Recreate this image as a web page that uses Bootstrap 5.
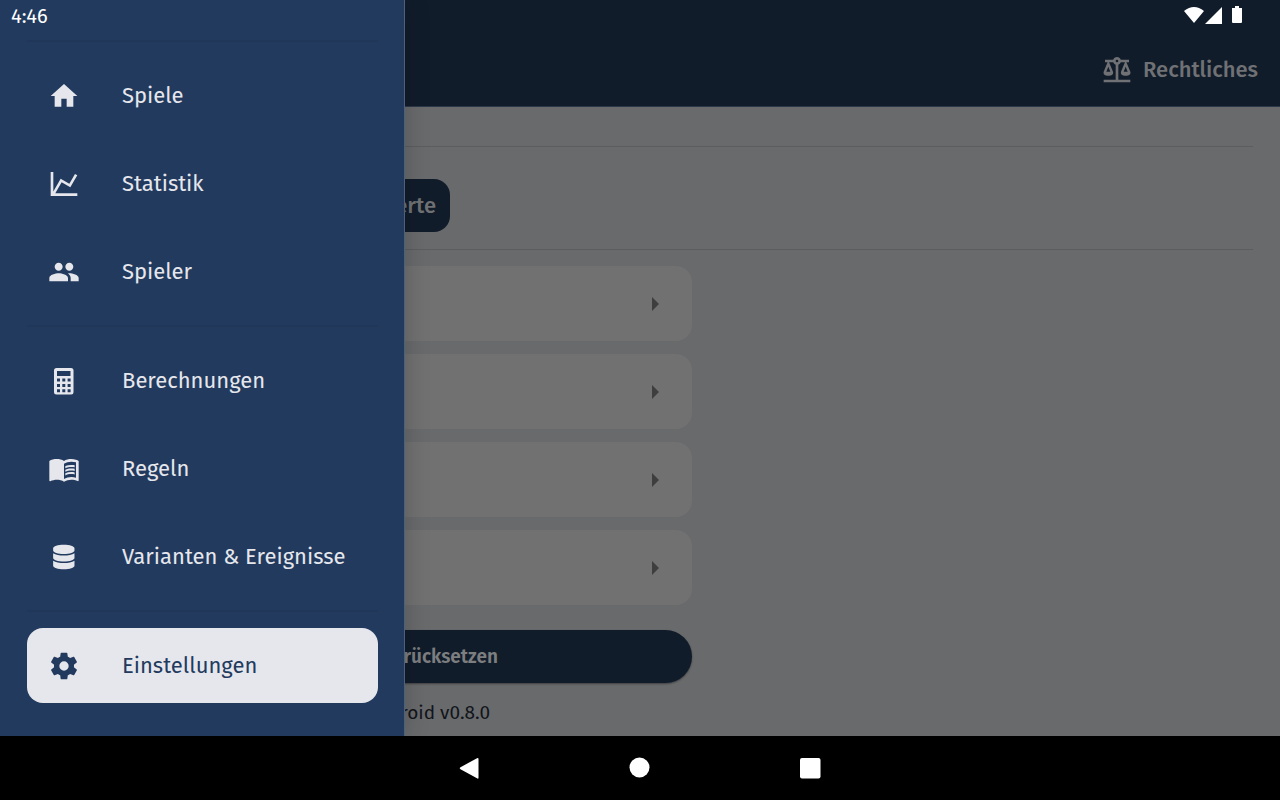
<!DOCTYPE html>
<html lang="de">
<head>
<meta charset="utf-8">
<meta name="viewport" content="width=device-width, initial-scale=1">
<title>Einstellungen</title>
<link rel="stylesheet" href="https://cdn.jsdelivr.net/npm/bootstrap@5.3.0/dist/css/bootstrap.min.css">
<style>
  :root { --navy: #223a5e; --dim-navy: #111c2b; --dim-page: #696a6c; --dim-card: #717171; --dim-text: #707174; --pale: #e6e7ed; }
  body { font-family: "Fira Sans", "Noto Sans", sans-serif; background: var(--dim-page); }
  svg { display: block; fill: currentColor; flex: none; }

  .status-bar { height: 32px; padding: 0 36px 0 11px; color: #fff; font-size: 20px; z-index: 3; pointer-events: none; }
  .app-bar { height: 107px; padding: 32px 22px 0; background: var(--dim-navy); border-bottom: 1px solid #2c3849; }
  .legal-link { color: var(--dim-text); font-size: 22px; font-weight: 500; gap: 10px; }

  .page-body { padding: 39px 27px 0; }
  .page-rule { height: 1px; background: #5c5d5f; }
  .reset-values { width: 423px; height: 53px; margin: 32px 0 17px; padding: 0 14px; border-radius: 16px; background: var(--dim-navy); color: var(--dim-text); font-size: 22px; font-weight: 500; }
  .settings-col { max-width: 665px; padding-top: 16px; gap: 13px; }
  .setting-row { height: 75px; padding: 0 33px; border-radius: 16px; background: var(--dim-card); color: #3e3e3e; }
  .reset-all { height: 53px; margin-top: 12px; padding: 2px 194px 0; border-radius: 27px; background: var(--dim-navy); color: #7d7e80; font-size: 19px; font-weight: 600; box-shadow: 0 1px 2px rgba(0,0,0,.4); }
  .version-line { padding-right: 202px; color: #11151b; font-size: 19px; line-height: 34px; }

  .drawer { width: 405px; padding: 40px 26px 0 27px; background: var(--navy); border-right: 1px solid #4d617f; box-shadow: 0 0 24px rgba(0,0,0,.2); z-index: 2; }
  .drawer-rule { height: 2px; margin: 16px 0; background: #20375a; }
  .drawer-rule:first-child { margin-top: 0; }
  .drawer-list { gap: 13px; }
  .drawer-link { height: 75px; padding: 0 21px; gap: 42px; border-radius: 16px; color: var(--pale); font-size: 22px; }
  .drawer-link.active { background: var(--pale); color: var(--navy); }

  .system-nav { height: 64px; background: #000; color: #fff; gap: 139px; z-index: 4; }
</style>
</head>
<body>
<div class="d-flex flex-column vh-100 overflow-hidden">
  <div class="position-relative flex-grow-1 overflow-hidden">

    <div class="status-bar position-absolute top-0 start-0 end-0 d-flex align-items-center justify-content-between">
      <span>4:46</span>
      <svg width="64" height="20" viewBox="0 0 64 20" aria-hidden="true">
        <path d="M4 5Q14-3 24 5L14 17ZM42 1V18H25ZM52 2h3V0h4v2h3v14q0 1-1 1h-8q-1 0-1-1Z"/>
      </svg>
    </div>

    <nav class="drawer position-absolute top-0 bottom-0 start-0" aria-label="Hauptmenü">
      <div class="drawer-rule"></div>
      <div class="drawer-list d-flex flex-column">
        <a class="drawer-link d-flex align-items-center text-decoration-none" href="#spiele">
          <svg width="32" height="32" viewBox="0 0 24 24"><path d="M10,20V14H14V20H19V12H22L12,3L2,12H5V20H10Z"/></svg>
          <span>Spiele</span></a>
        <a class="drawer-link d-flex align-items-center text-decoration-none" href="#statistik">
          <svg width="32" height="32" viewBox="0 0 24 24"><path d="M16,11.78L20.24,4.45L21.97,5.45L16.74,14.5L10.23,10.75L5.46,19H22V21H2V3H4V17.54L9.5,8L16,11.78Z"/></svg>
          <span>Statistik</span></a>
        <a class="drawer-link d-flex align-items-center text-decoration-none" href="#spieler">
          <svg width="32" height="32" viewBox="0 0 24 24"><path d="M16 11c1.66 0 2.99-1.34 2.99-3S17.66 5 16 5c-1.66 0-3 1.34-3 3s1.34 3 3 3zm-8 0c1.66 0 2.99-1.34 2.99-3S9.66 5 8 5C6.34 5 5 6.34 5 8s1.34 3 3 3zm0 2c-2.33 0-7 1.17-7 3.5V19h14v-2.500c0-2.330-4.670-3.500-7-3.500zm8 0c-.29 0-.62.02-.97.05 1.160.84 1.970 1.970 1.970 3.450V19h6v-2.500c0-2.330-4.670-3.500-7-3.500z"/></svg>
          <span>Spieler</span></a>
      </div>
      <div class="drawer-rule"></div>
      <div class="drawer-list d-flex flex-column">
        <a class="drawer-link d-flex align-items-center text-decoration-none" href="#berechnungen">
          <svg width="32" height="32" viewBox="0 0 32 32"><path fill-rule="evenodd" d="M8.500 3H23q2.500 0 2.500 2.500V27q0 2.500-2.500 2.500H8.500Q6 29.500 6 27V5.500Q6 3 8.500 3ZM9 6v5h13.500V6ZM9 13.500v3h3v-3Zm5.300 0v3h3v-3Zm5.300 0v3h3v-3ZM9 19v3h3v-3Zm5.300 0v3h3v-3Zm5.300 0v3h3v-3ZM9 24.300v3h3v-3Zm5.300 0v3h3v-3Zm5.300 0v3h3v-3Z"/></svg>
          <span>Berechnungen</span></a>
        <a class="drawer-link d-flex align-items-center text-decoration-none" href="#regeln">
          <svg width="32" height="32" viewBox="0 0 24 24"><path d="M21 5c-1.110-.35-2.330-.5-3.500-.5-1.950 0-4.050.4-5.500 1.500-1.450-1.100-3.550-1.500-5.500-1.500S2.450 4.900 1 6v14.650c0 .25.25.5.5.5.1 0 .15-.05.25-.05C3.100 20.450 5.050 20 6.500 20c1.950 0 4.050.4 5.500 1.500 1.350-.85 3.800-1.500 5.500-1.500 1.650 0 3.350.3 4.750 1.050.1.05.15.05.25.05.25 0 .5-.25.5-.5V6c-.6-.45-1.250-.75-2-1zm0 13.500c-1.100-.35-2.300-.5-3.500-.5-1.700 0-4.150.65-5.500 1.500V8c1.350-.85 3.800-1.500 5.500-1.500 1.200 0 2.400.15 3.500.5v11.500z"/><path d="M17.500 10.500c.88 0 1.730.09 2.500.26V9.240c-.79-.15-1.640-.24-2.500-.24-1.700 0-3.240.29-4.500.83v1.660c1.130-.64 2.700-.99 4.500-.99zM13 12.490v1.660c1.130-.64 2.700-.99 4.500-.99.88 0 1.730.09 2.500.26V11.900c-.79-.15-1.640-.24-2.500-.24-1.700 0-3.240.3-4.500.83zm4.500 1.840c-1.700 0-3.240.29-4.500.83v1.660c1.130-.64 2.700-.99 4.500-.99.88 0 1.730.09 2.500.26v-1.520c-.79-.16-1.640-.24-2.500-.24z"/></svg>
          <span>Regeln</span></a>
        <a class="drawer-link d-flex align-items-center text-decoration-none" href="#varianten">
          <svg width="32" height="32" viewBox="-108 -80 672 672"><path d="M448 73.143v45.714C448 159.143 347.667 192 224 192S0 159.143 0 118.857V73.143C0 32.857 100.333 0 224 0s224 32.857 224 73.143zM448 176v102.857C448 319.143 347.667 352 224 352S0 319.143 0 278.857V176c48.125 33.143 136.208 48.572 224 48.572S399.874 209.143 448 176zm0 160v102.857C448 479.143 347.667 512 224 512S0 479.143 0 438.857V336c48.125 33.143 136.208 48.572 224 48.572S399.874 369.143 448 336z"/></svg>
          <span>Varianten &amp; Ereignisse</span></a>
      </div>
      <div class="drawer-rule"></div>
      <a class="drawer-link active d-flex align-items-center text-decoration-none" href="#einstellungen" aria-current="page">
        <svg width="32" height="32" viewBox="0 0 24 24"><path d="M12,15.5A3.5,3.5 0 0,1 8.5,12A3.5,3.5 0 0,1 12,8.5A3.5,3.5 0 0,1 15.5,12A3.5,3.5 0 0,1 12,15.5M19.43,12.97C19.47,12.65 19.5,12.33 19.5,12C19.5,11.67 19.47,11.34 19.43,11L21.54,9.37C21.73,9.22 21.78,8.95 21.66,8.73L19.66,5.27C19.54,5.05 19.27,4.96 19.05,5.05L16.56,6.05C16.04,5.66 15.5,5.32 14.87,5.07L14.5,2.42C14.46,2.18 14.25,2 14,2H10C9.75,2 9.54,2.18 9.5,2.42L9.13,5.07C8.5,5.32 7.96,5.66 7.44,6.05L4.95,5.05C4.73,4.96 4.46,5.05 4.34,5.27L2.34,8.73C2.21,8.95 2.27,9.22 2.46,9.37L4.57,11C4.53,11.34 4.5,11.67 4.5,12C4.5,12.33 4.53,12.65 4.57,12.97L2.46,14.63C2.27,14.78 2.21,15.05 2.34,15.27L4.34,18.73C4.46,18.95 4.73,19.03 4.95,18.95L7.44,17.94C7.96,18.34 8.5,18.68 9.13,18.93L9.5,21.58C9.54,21.82 9.75,22 10,22H14C14.25,22 14.46,21.82 14.5,21.58L14.87,18.93C15.5,18.67 16.04,18.34 16.56,17.94L19.05,18.95C19.27,19.03 19.54,18.95 19.66,18.73L21.66,15.27C21.78,15.05 21.73,14.78 21.54,14.63L19.43,12.97Z"/></svg>
        <span>Einstellungen</span></a>
    </nav>

    <header class="app-bar d-flex align-items-center justify-content-end">
      <a class="legal-link d-flex align-items-center text-decoration-none" href="#rechtliches">
        <svg width="32" height="32" viewBox="0 0 24 24"><path fill-rule="evenodd" d="M12,3C10.73,3 9.6,3.8 9.18,5H3V7H4.95L2,14C1.53,16 3,17 5.5,17C8,17 9.56,16 9,14L6.05,7H9.17C9.5,7.85 10.15,8.5 11,8.83V20H2V22H22V20H13V8.82C13.85,8.5 14.5,7.85 14.82,7H17.95L15,14C14.53,16 16,17 18.5,17C21,17 22.56,16 22,14L19.05,7H21V5H14.83C14.4,3.8 13.27,3 12,3M12,5A1,1 0 0,1 13,6A1,1 0 0,1 12,7A1,1 0 0,1 11,6A1,1 0 0,1 12,5M5.5,10.25L7,14H4L5.5,10.25M18.5,10.25L20,14H17L18.5,10.25Z"/></svg>
        <span>Rechtliches</span></a>
    </header>

    <main class="page-body">
      <div class="page-rule"></div>
      <button type="button" class="reset-values d-block border-0 text-end">Werte</button>
      <div class="page-rule"></div>
      <div class="settings-col d-flex flex-column">
        <button type="button" class="setting-row d-flex align-items-center justify-content-end border-0" aria-label="Einstellung 1"><svg width="7" height="14" viewBox="0 0 7 14"><path d="M0 0L7 7L0 14Z"/></svg></button>
        <button type="button" class="setting-row d-flex align-items-center justify-content-end border-0" aria-label="Einstellung 2"><svg width="7" height="14" viewBox="0 0 7 14"><path d="M0 0L7 7L0 14Z"/></svg></button>
        <button type="button" class="setting-row d-flex align-items-center justify-content-end border-0" aria-label="Einstellung 3"><svg width="7" height="14" viewBox="0 0 7 14"><path d="M0 0L7 7L0 14Z"/></svg></button>
        <button type="button" class="setting-row d-flex align-items-center justify-content-end border-0" aria-label="Einstellung 4"><svg width="7" height="14" viewBox="0 0 7 14"><path d="M0 0L7 7L0 14Z"/></svg></button>
        <button type="button" class="reset-all border-0 text-end">zurücksetzen</button>
        <p class="version-line m-0 text-end">Android v0.8.0</p>
      </div>
    </main>
  </div>

  <footer class="system-nav d-flex align-items-center justify-content-center flex-shrink-0">
    <button type="button" class="btn p-0 border-0 text-white" aria-label="Zurück"><svg width="32" height="32" viewBox="0 0 32 32"><path d="M7.500 15.200L24 6.200Q25.500 5.500 25.500 7V25.500Q25.500 27.500 24 26.300L7.500 17.200Q6 16.200 7.500 15.200Z"/></svg></button>
    <button type="button" class="btn p-0 border-0 text-white" aria-label="Startseite"><svg width="32" height="32" viewBox="0 0 32 32"><circle cx="15.500" cy="15.500" r="10"/></svg></button>
    <button type="button" class="btn p-0 border-0 text-white" aria-label="Übersicht"><svg width="32" height="32" viewBox="0 0 32 32"><rect x="5" y="6" width="20.500" height="20.500" rx="2"/></svg></button>
  </footer>
</div>
<script src="https://cdn.jsdelivr.net/npm/bootstrap@5.3.0/dist/js/bootstrap.bundle.min.js"></script>
</body>
</html>
